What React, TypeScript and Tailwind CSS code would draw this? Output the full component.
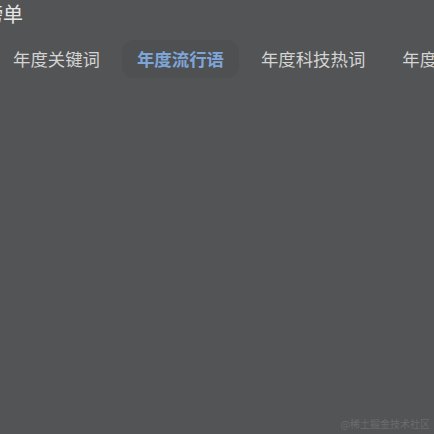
import React from 'react';

const tabs = ['年度关键词', '年度流行语', '年度科技热词', '年度开源项目'];

export default function App() {
  const active = 1;
  return (
    <div
      className="relative h-[434px] w-[434px] overflow-hidden bg-[#535456]"
      style={{ fontFamily: '"Microsoft YaHei", "Noto Sans CJK SC", sans-serif' }}
    >
      <h1 className="ml-[-17px] mt-[2px] whitespace-nowrap text-[20px] leading-[24px] font-normal text-[#e6e6e6]">
        榜单
      </h1>
      <div className="ml-[-2px] mt-[14px] flex gap-[7px] whitespace-nowrap">
        {tabs.map((t, i) => (
          <div
            key={t}
            className={`flex h-[38px] shrink-0 items-center rounded-xl px-[15px] text-[17.4px] ${
              i === active ? 'bg-[#4f5052] font-bold text-[#7ea5d8]' : 'text-[#d4d4d4]'
            }`}
          >
            {t}
          </div>
        ))}
      </div>
      <div className="absolute bottom-[4px] right-[4px] text-[10px] leading-[12px] text-[#6b6c6e]">
        @稀土掘金技术社区
      </div>
    </div>
  );
}
